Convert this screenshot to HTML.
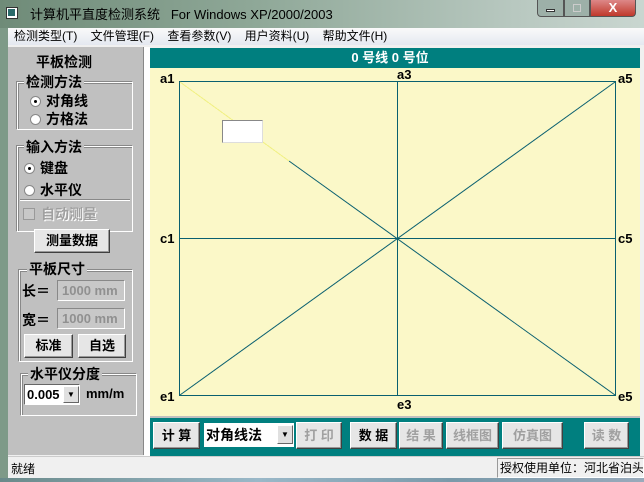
<!DOCTYPE html>
<html><head><meta charset="utf-8"><style>
*{margin:0;padding:0;box-sizing:border-box}
body{width:644px;height:482px;position:relative;overflow:hidden;background:#7e9a88;font-family:"Liberation Sans","Noto Sans CJK SC",sans-serif}
.a{position:absolute}
.t{font-family:"Liberation Sans","Noto Sans CJK SC",sans-serif;font-size:13px;font-weight:bold;color:#000;white-space:nowrap}
.btn{position:absolute;background:#e6e6e6;border:1px solid;border-color:#fff #404040 #404040 #fff;box-shadow:inset -1px -1px #999;font-size:13px;font-weight:bold;text-align:center;line-height:22px;white-space:nowrap}
.dis{color:#a0a0a0}
.grp{position:absolute;border:1px solid #fff;box-shadow:inset 1px 1px #888,-1px -1px #888}
.gl{position:absolute;background:#c0c0c0;font-size:14px;font-weight:bold;padding:0 2px;white-space:nowrap}
.radio{display:inline-block;width:11px;height:11px;border-radius:50%;background:#fff;border:1px solid #888;vertical-align:-1px;margin-right:5px;position:relative}
.radio.on:after{content:"";position:absolute;left:3px;top:3px;width:3px;height:3px;background:#000;border-radius:50%}
.edit{position:absolute;background:#c8c8c8;border:1px solid;border-color:#888 #fff #fff #888;color:#909090;font-size:13px;font-weight:bold;padding-left:4px;line-height:19px}
</style></head><body>
<div class="a" style="left:0;top:0;width:644px;height:28px;background:linear-gradient(90deg,#6f8b78,#8fa898 40%,#b8c8c0 80%,#c9d6d0)"></div>
<div class="a" style="left:6px;top:7px;width:12px;height:12px;background:#fff;border:1px solid #333"><div style="width:7px;height:7px;background:#2a6a6a;margin:1px"></div></div>
<div class="a" style="left:30px;top:4px;font-size:13px;color:#000;white-space:nowrap">计算机平直度检测系统&nbsp;&nbsp;&nbsp;For Windows XP/2000/2003</div>
<div class="a" style="left:537px;top:0;width:27px;height:17px;background:#9db0a8;border:1px solid #555;border-top:none;border-radius:0 0 0 4px"><div style="margin:9px 8px 0;height:3px;background:#fff;border:1px solid #333"></div></div>
<div class="a" style="left:564px;top:0;width:26px;height:17px;background:#9db0a8;border:1px solid #555;border-top:none"><div style="margin:4px 8px;height:8px;border:1px solid #ccc"></div></div>
<div class="a" style="left:590px;top:0;width:46px;height:17px;background:linear-gradient(#d88,#c0392b);border:1px solid #555;border-top:none;border-radius:0 0 4px 0;color:#fff;font-weight:bold;font-size:13px;text-align:center;line-height:15px">X</div>
<div class="a" style="left:8px;top:28px;width:636px;height:450px;background:#f0f0f0"></div>
<div class="a" style="left:8px;top:28px;width:636px;height:17px;background:linear-gradient(#fafafa,#e4e8f0);font-size:12px;line-height:17px;white-space:nowrap;padding-left:6px;word-spacing:0">检测类型(T)&nbsp;&nbsp;&nbsp;&nbsp;文件管理(F)&nbsp;&nbsp;&nbsp;&nbsp;查看参数(V)&nbsp;&nbsp;&nbsp;&nbsp;用户资料(U)&nbsp;&nbsp;&nbsp;&nbsp;帮助文件(H)</div>
<div class="a" style="left:8px;top:47px;width:136px;height:408px;background:#c0c0c0;border-right:1px solid #888"></div>
<div class="a" style="left:144px;top:47px;width:6px;height:409px;background:#fff"></div>
<div class="a t" style="left:36px;top:52px;font-size:14px">平板检测</div>
<div class="grp" style="left:17px;top:82px;width:116px;height:48px"></div>
<div class="gl" style="left:24px;top:72px">检测方法</div>
<div class="a t" style="left:30px;top:91px;font-size:14px"><span class="radio on"></span>对角线</div>
<div class="a t" style="left:30px;top:109px;font-size:14px"><span class="radio"></span>方格法</div>
<div class="grp" style="left:17px;top:146px;width:116px;height:86px"></div>
<div class="gl" style="left:24px;top:137px">输入方法</div>
<div class="a t" style="left:24px;top:158px;font-size:14px"><span class="radio on"></span>键盘</div>
<div class="a t" style="left:24px;top:180px;font-size:14px"><span class="radio"></span>水平仪</div>
<div class="a" style="left:20px;top:199px;width:110px;height:2px;border-top:1px solid #888;border-bottom:1px solid #fff"></div>
<div class="a t" style="left:23px;top:204px;font-size:14px;color:#a0a0a0;text-shadow:1px 1px #fff"><span style="display:inline-block;width:12px;height:12px;border:1px solid #999;vertical-align:-1px;margin-right:6px;background:#c8c8c8"></span>自动测量</div>
<div class="btn" style="left:34px;top:229px;width:76px;height:24px">测量数据</div>
<div class="grp" style="left:19px;top:270px;width:114px;height:92px"></div>
<div class="gl" style="left:27px;top:259px">平板尺寸</div>
<div class="a t" style="left:22px;top:281px;font-size:14px">长＝</div>
<div class="edit" style="left:57px;top:280px;width:68px;height:21px">1000 mm</div>
<div class="a t" style="left:22px;top:310px;font-size:14px">宽＝</div>
<div class="edit" style="left:57px;top:308px;width:68px;height:21px">1000 mm</div>
<div class="btn" style="left:24px;top:334px;width:49px;height:24px">标准</div>
<div class="btn" style="left:78px;top:334px;width:48px;height:24px">自选</div>
<div class="grp" style="left:21px;top:374px;width:116px;height:42px"></div>
<div class="gl" style="left:28px;top:364px">水平仪分度</div>
<div class="a" style="left:24px;top:384px;width:56px;height:21px;background:#fff;border:1px solid;border-color:#666 #fff #fff #666;font-size:13px;font-weight:bold;line-height:19px;padding-left:2px">0.005</div>
<div class="a" style="left:63px;top:386px;width:16px;height:17px;background:#e0e0e0;border:1px solid;border-color:#fff #666 #666 #fff;font-size:8px;text-align:center;line-height:16px">▼</div>
<div class="a t" style="left:86px;top:386px">mm/m</div>
<div class="a" style="left:150px;top:48px;width:490px;height:20px;background:#007f7f;color:#fff;font-size:13px;font-weight:bold;text-align:center;line-height:20px;text-indent:-10px">0 号线 0 号位</div>
<div class="a" style="left:150px;top:68px;width:490px;height:348px;background:#fffdd0;background-image:radial-gradient(#f0e8b0 0.5px,transparent 0.6px);background-size:2px 2px"></div>
<svg class="a" style="left:0;top:0" width="644" height="482">
<g stroke="#0a6070" stroke-width="1" fill="none">
<rect x="179.5" y="81.5" width="436" height="314"/>
<line x1="397.5" y1="82" x2="397.5" y2="395"/>
<line x1="180" y1="238.5" x2="615" y2="238.5"/>
<line x1="615" y1="82" x2="180" y2="395"/>
<line x1="289" y1="161" x2="615" y2="395"/>
</g>
<line x1="180" y1="82" x2="289" y2="161" stroke="#f0f080" stroke-width="1"/>
<g font-family="Liberation Sans" font-weight="bold" font-size="13" fill="#000">
<text x="160" y="83">a1</text><text x="397" y="79">a3</text><text x="618" y="83">a5</text>
<text x="160" y="243">c1</text><text x="618" y="243">c5</text>
<text x="160" y="401">e1</text><text x="397" y="409">e3</text><text x="618" y="401">e5</text>
</g>
</svg>
<div class="a" style="left:222px;top:120px;width:41px;height:23px;background:#fff;border:1px solid;border-color:#888 #ddd #ddd #888"></div>
<div class="a" style="left:150px;top:416px;width:490px;height:40px;background:#007f7f;border-top:2px solid #c0c0c0"></div>
<div class="btn" style="left:153px;top:422px;width:47px;height:27px;line-height:25px">计 算</div>
<div class="a" style="left:204px;top:423px;width:90px;height:24px;background:#fff;font-size:14px;font-weight:bold;line-height:24px;padding-left:2px">对角线法</div>
<div class="a" style="left:277px;top:425px;width:16px;height:19px;background:#e0e0e0;border:1px solid;border-color:#fff #666 #666 #fff;font-size:8px;text-align:center;line-height:18px">▼</div>
<div class="btn dis" style="left:296px;top:422px;width:46px;height:27px;line-height:25px">打 印</div>
<div class="btn" style="left:350px;top:422px;width:47px;height:27px;line-height:25px">数 据</div>
<div class="btn dis" style="left:399px;top:422px;width:44px;height:27px;line-height:25px">结 果</div>
<div class="btn dis" style="left:446px;top:422px;width:53px;height:27px;line-height:25px">线框图</div>
<div class="btn dis" style="left:502px;top:422px;width:61px;height:27px;line-height:25px">仿真图</div>
<div class="btn dis" style="left:584px;top:422px;width:45px;height:27px;line-height:25px">读 数</div>
<div class="a" style="left:8px;top:456px;width:636px;height:22px;background:#f0f0f0;border-top:1px solid #ccc"></div>
<div class="a" style="left:11px;top:460px;font-size:12px">就绪</div>
<div class="a" style="left:497px;top:458px;width:147px;height:20px;border:1px solid;border-color:#999 #fff #fff #999;font-size:12px;line-height:18px;padding-left:2px;white-space:nowrap;overflow:hidden">授权使用单位：河北省泊头</div>
<div class="a" style="left:0;top:478px;width:644px;height:4px;background:linear-gradient(90deg,#6a8a8a,#9ab8c8 40%,#7a9aaa 70%,#9ab)"></div>
</body></html>
